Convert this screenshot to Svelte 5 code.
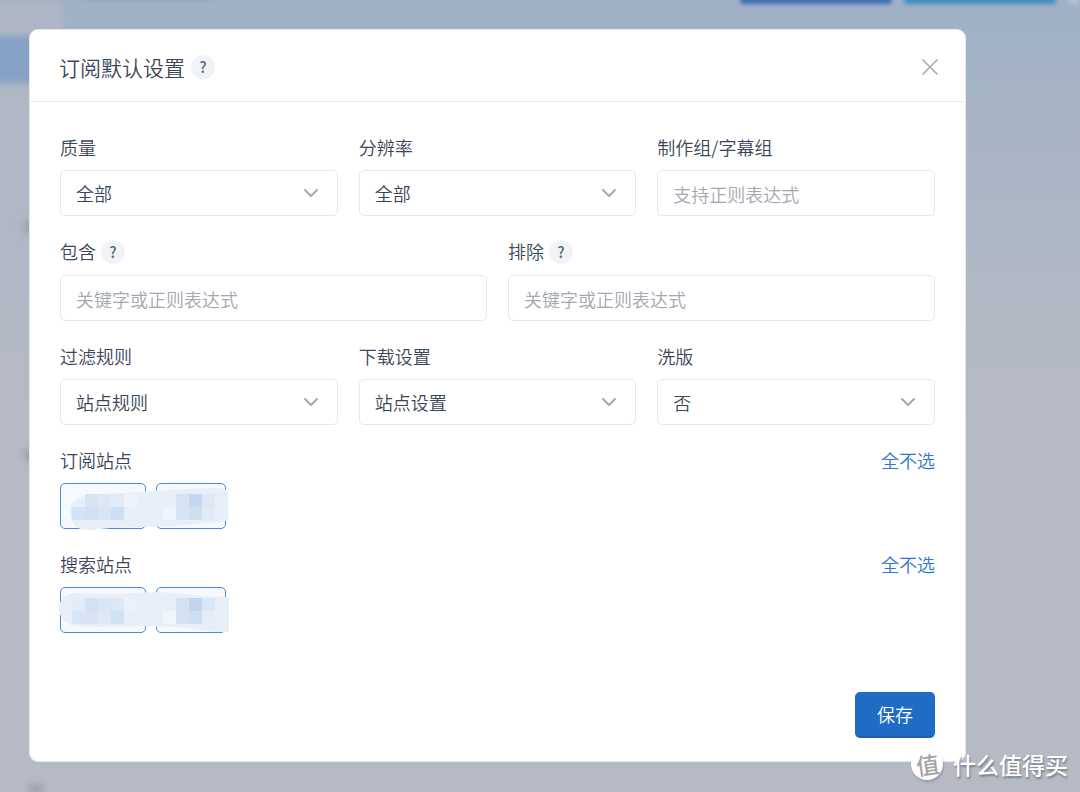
<script lang="ts">
  type Option = { id: string; label: string; value: string; options: string[] }

  const basics: Option[] = [
    { id: 'quality', label: '质量', value: '全部', options: ['全部'] },
    { id: 'resolution', label: '分辨率', value: '全部', options: ['全部'] },
  ]

  const rules: Option[] = [
    { id: 'filter', label: '过滤规则', value: '站点规则', options: ['站点规则'] },
    { id: 'download', label: '下载设置', value: '站点设置', options: ['站点设置'] },
    { id: 'upgrade', label: '洗版', value: '否', options: ['否', '是'] },
  ]

  const keywords = [
    { id: 'include', label: '包含' },
    { id: 'exclude', label: '排除' },
  ]

  // each cell is [column, row, colour] on a 13px grid
  let groups = $state([
    {
      id: 'rss',
      label: '订阅站点',
      picked: [true, true],
      blob: 'M10 29 C10 17 18 13 34 12 L62 10 L108 7 L150 5 Q160 4 168 8 L169 35 Q165 40 157 39 L110 43 L50 45 L32 47 Q18 49 12 39 Z',
      cells: [
        [1, 0, '#d6e4f4'], [2, 0, '#dce8f5'], [3, 0, '#e2ebf8'], [4, 0, '#edf2fb'],
        [0, 1, '#d3e2f4'], [1, 1, '#d1e0f2'], [2, 1, '#d8e5f5'], [3, 1, '#cfdff3'],
        [7, 1, '#eff4fc'], [8, 0, '#d5e3f4'], [8, 1, '#d5e3f4'], [9, 0, '#c4d7f0'],
        [9, 1, '#cfdff2'], [10, 0, '#dce8f6'], [10, 1, '#e2eaf6'],
      ],
    },
    {
      id: 'search',
      label: '搜索站点',
      picked: [true, true],
      blob: 'M-1 21 Q0 8 14 6 L50 7 L94 5 L118 6 L140 9 L169 10 L169 45 L156 45 L118 40 L78 39 L40 40 L14 39 Q0 36 -1 21 Z',
      cells: [
        [0, 0, '#e2ebf7'], [1, 0, '#d3e1f3'], [2, 0, '#dae6f5'], [3, 0, '#dce8f6'], [4, 0, '#ebf1fa'],
        [0, 1, '#d8e5f5'], [1, 1, '#d8e4f4'], [2, 1, '#dde8f6'], [3, 1, '#d1e0f3'],
        [7, 1, '#f1f5fc'], [8, 0, '#d3e1f3'], [8, 1, '#d3e1f3'], [9, 0, '#c2d5ef'],
        [9, 1, '#cfdff2'], [10, 0, '#d9e6f6'], [10, 1, '#e5edf8'],
      ],
    },
  ])

  function clearGroup(index: number) {
    groups[index].picked = groups[index].picked.map(() => false)
  }
</script>

{#snippet selectField(field: Option)}
  <div class="field">
    <label for={field.id}>{field.label}</label>
    <div class="select-wrap">
      <select id={field.id} bind:value={field.value}>
        {#each field.options as option}
          <option>{option}</option>
        {/each}
      </select>
      <svg class="chevron" viewBox="0 0 16 10" aria-hidden="true">
        <path d="M2 2 L8 8 L14 2" />
      </svg>
    </div>
  </div>
{/snippet}

<div class="page">
  <div class="backdrop" aria-hidden="true">
    <div class="side">
      <div class="side-active"></div>
    </div>
    <div class="main">
      <div class="top-title"></div>
      <div class="top-button dark"></div>
      <div class="top-button light"></div>
      <div class="top-button pale"></div>
    </div>
    <svg class="smudges" viewBox="0 0 60 792">
      <circle cx="30" cy="227" r="5" />
      <circle cx="30" cy="455" r="5" />
      <circle cx="36" cy="792" r="7" />
    </svg>
  </div>

  <div class="modal" role="dialog" aria-labelledby="modal-title">
    <header>
      <h1 id="modal-title">订阅默认设置</h1>
      <button type="button" class="help">?</button>
      <button type="button" class="close" aria-label="关闭">
        <svg viewBox="0 0 18 18"><path d="M2 2 L16 16 M16 2 L2 16" /></svg>
      </button>
    </header>

    <form onsubmit={(e) => e.preventDefault()}>
      <div class="row three">
        {#each basics as field}
          {@render selectField(field)}
        {/each}
        <div class="field">
          <label for="team">制作组/字幕组</label>
          <input id="team" type="text" placeholder="支持正则表达式" />
        </div>
      </div>

      <div class="row two">
        {#each keywords as field}
          <div class="field">
            <div class="label-line">
              <label for={field.id}>{field.label}</label>
              <button type="button" class="help">?</button>
            </div>
            <input id={field.id} type="text" placeholder="关键字或正则表达式" />
          </div>
        {/each}
      </div>

      <div class="row three">
        {#each rules as field}
          {@render selectField(field)}
        {/each}
      </div>

      {#each groups as group, index}
        <fieldset class="field">
          <div class="group-head">
            <span>{group.label}</span>
            <a href="#{group.id}" onclick={() => clearGroup(index)}>全不选</a>
          </div>
          <div class="chips">
            {#each group.picked as _, i}
              <label class="chip" class:picked={group.picked[i]}>
                <input type="checkbox" bind:checked={group.picked[i]} aria-label={group.label} />
              </label>
            {/each}
            <svg class="mosaic" viewBox="0 0 170 50" aria-hidden="true">
              <path d={group.blob} fill="#e8eff9" />
              {#each group.cells as [col, row, colour]}
                <rect x={12 + Number(col) * 13} y={11 + Number(row) * 13} width="13" height="13" fill={String(colour)} />
              {/each}
            </svg>
          </div>
        </fieldset>
      {/each}

      <footer>
        <button type="submit" class="save">保存</button>
      </footer>
    </form>
  </div>

  <div class="watermark">
    <span class="badge"><span>值</span></span>
    <span>什么值得买</span>
  </div>
</div>

<style>
  :global(body) {
    margin: 0;
    font-family: 'Noto Sans CJK SC', sans-serif;
    font-weight: 350;
    color: #3c465a;
  }

  * {
    box-sizing: border-box;
  }

  .page {
    position: relative;
    min-height: 100vh;
    padding: 29px 114px 30px 29px;
    overflow: hidden;
    background: linear-gradient(#a0b1c6 0, #b0b8c5 270px, #b6bac4 420px);
  }

  .backdrop {
    position: absolute;
    inset: 0;
    display: flex;
  }

  .side {
    width: 68px;
    padding-top: 36px;
    background: linear-gradient(#afb7c6 0, #b1b8c5 270px, #b6bac4 420px);
    filter: blur(3px);
    margin-left: -6px;
  }

  .side-active {
    height: 47px;
    background: #86a2c6;
  }

  .main {
    flex: 1;
    display: flex;
    justify-content: flex-end;
    gap: 12px;
    margin-top: -12px;
    filter: blur(2px);
  }

  .top-title {
    width: 126px;
    height: 12px;
    margin-left: 22px;
    margin-right: auto;
    background: #8e9fb5;
  }

  .top-button {
    width: 152px;
    height: 16px;
    border-radius: 4px;
  }

  .dark {
    background: #3d6cb0;
  }

  .light {
    background: #3f8dc2;
  }

  .pale {
    width: 12px;
    background: #b9c1cd;
  }

  .smudges {
    position: absolute;
    top: 0;
    left: 0;
    width: 60px;
    height: 792px;
    fill: #868d98;
    filter: blur(4px);
  }

  .modal {
    position: relative;
    background: #fff;
    border: 1px solid #e6e9ee;
    border-radius: 9px;
  }

  header {
    display: flex;
    align-items: center;
    gap: 6px;
    height: 72px;
    padding: 2px 26px 0 29px;
    border-bottom: 1px solid #e9ebee;
  }

  h1 {
    margin: 0;
    font-size: 21px;
    line-height: 28px;
    font-weight: 350;
  }

  button,
  input,
  select {
    font: inherit;
    color: inherit;
  }

  .help {
    width: 24px;
    height: 24px;
    padding: 0;
    border: none;
    border-radius: 50%;
    background: #f0f4f9;
    color: #5b6577;
    font-size: 15px;
    font-weight: 500;
    line-height: 24px;
  }

  .close {
    display: flex;
    margin-left: auto;
    padding: 0;
    border: none;
    background: none;
  }

  .close svg {
    width: 18px;
    height: 18px;
    fill: none;
    stroke: #adadad;
    stroke-width: 1.7;
    stroke-linecap: round;
  }

  form {
    display: flex;
    flex-direction: column;
    gap: 22px;
    padding: 32px 30px 23px;
    font-size: 18px;
    line-height: 27px;
  }

  .row {
    display: grid;
    gap: 21px;
  }

  .three {
    grid-template-columns: repeat(3, 1fr);
  }

  .two {
    grid-template-columns: repeat(2, 1fr);
  }

  .field {
    display: flex;
    flex-direction: column;
    gap: 9px;
    min-width: 0;
    margin: 0;
    padding: 0;
    border: none;
  }

  .label-line {
    display: flex;
    gap: 5px;
    height: 28px;
  }

  .label-line .help {
    align-self: center;
  }

  input[type='text'],
  select {
    width: 100%;
    height: 46px;
    padding: 1px 15px 0;
    border: 1px solid #e6e8eb;
    border-radius: 5px;
    background: #fff;
    outline: none;
    appearance: none;
  }

  input::placeholder {
    color: #a3a8b2;
    opacity: 1;
  }

  .select-wrap {
    position: relative;
  }

  .chevron {
    position: absolute;
    top: 18px;
    right: 19px;
    width: 16px;
    height: 10px;
    fill: none;
    stroke: #a3a8b2;
    stroke-width: 2;
    stroke-linecap: round;
    stroke-linejoin: round;
    pointer-events: none;
  }

  .group-head {
    display: flex;
    justify-content: space-between;
  }

  a {
    color: #2f77cc;
    text-decoration: none;
  }

  .chips {
    position: relative;
    display: flex;
    gap: 10px;
  }

  .chip {
    width: 86px;
    height: 46px;
    border: 1px solid #e6e8eb;
    border-radius: 5px;
  }

  .chip + .chip {
    width: 70px;
  }

  .chip.picked {
    border-color: #4a8bd8;
    background: #f6f9fe;
  }

  .chip input {
    position: absolute;
    opacity: 0;
  }

  .mosaic {
    position: absolute;
    top: 0;
    left: 0;
    width: 170px;
    height: 50px;
    overflow: visible;
    pointer-events: none;
  }

  footer {
    display: flex;
    justify-content: flex-end;
    padding-top: 37px;
  }

  .save {
    height: 46px;
    padding: 0 21px;
    border: 1px solid #206bc4;
    border-bottom: 2px solid #1c5fb0;
    border-radius: 5px;
    background: #206bc4;
    color: #fff;
  }

  .watermark {
    position: absolute;
    right: 12px;
    bottom: 12px;
    display: flex;
    align-items: center;
    gap: 10px;
    color: #fff;
    font-size: 23px;
    line-height: 32px;
    font-weight: 500;
    text-shadow: 1px 2px 2px rgba(80, 85, 95, 0.6);
  }

  .badge {
    display: flex;
    align-items: center;
    justify-content: center;
    width: 32px;
    height: 32px;
    border-radius: 50%;
    background: #fff;
    color: #a2a4a8;
    text-shadow: none;
    box-shadow: 1px 2px 2px rgba(80, 85, 95, 0.3);
  }

  .badge span {
    transform: rotate(-8deg);
  }
</style>
